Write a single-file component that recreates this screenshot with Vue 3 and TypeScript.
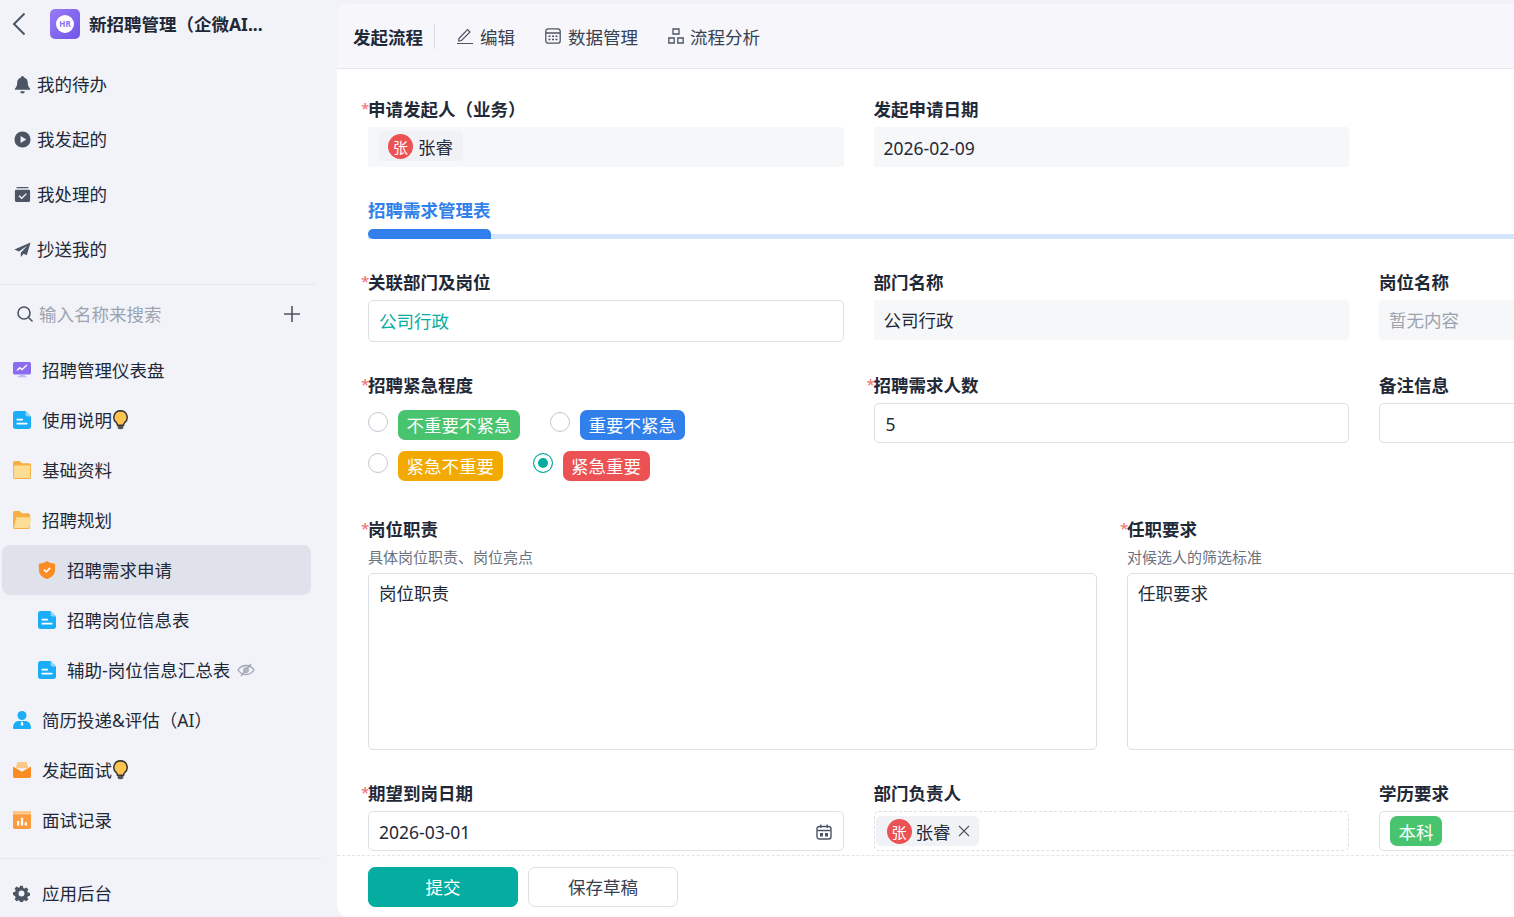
<script setup lang="ts">
interface Shape { d: string; fill: string }
interface NavItem { label: string; icon: Shape[]; sub?: boolean; active?: boolean; bulb?: boolean; hidden?: boolean }

const G = '#4b5563'
const docIcon: Shape[] = [
  { d: 'M3 0h11l6 6v11a3 3 0 0 1-3 3H3a3 3 0 0 1-3-3V3a3 3 0 0 1 3-3z', fill: '#1badf8' },
  { d: 'M14 0l6 6h-4a2 2 0 0 1-2-2z', fill: '#8fd6fc' },
  { d: 'M4 8.500h7v2H4zM4 13h12v2H4z', fill: '#fff' },
]
const topItems: { label: string; icon: Shape[] }[] = [
  { label: '我的待办', icon: [{ d: 'M10 1a1.600 1.600 0 0 1 1.600 1.600c2.600.8 4 3 4 5.600 0 3.200.8 4.600 2.400 6.200v1.100H2v-1.100c1.600-1.600 2.400-3 2.400-6.200 0-2.600 1.400-4.800 4-5.600A1.600 1.600 0 0 1 10 1zM7.600 17h4.800a2.400 2.400 0 0 1-4.800 0z', fill: G }] },
  { label: '我发起的', icon: [{ d: 'M10 1.500a8.500 8.500 0 1 1 0 17 8.500 8.500 0 0 1 0-17zM8 6.200v7.600l6-3.800z', fill: G }] },
  { label: '我处理的', icon: [{ d: 'M5 2h10a1.500 1.500 0 0 1 1.500 1.500H3.500A1.500 1.500 0 0 1 5 2zM3.500 5h13A1.500 1.500 0 0 1 18 6.500V16a2 2 0 0 1-2 2H4a2 2 0 0 1-2-2V6.500A1.500 1.500 0 0 1 3.500 5zM13.600 8.600l-4.400 4.300-2.400-2.200-1 1.100 3.400 3.100 5.400-5.300z', fill: G }] },
  { label: '抄送我的', icon: [{ d: 'M18.500 2.500L1.500 10l4.700 2.200L15 6l-6.800 7.300v4.700l3-3.400 3.300 1.400z', fill: G }] },
]
const treeItems: NavItem[] = [
  { label: '招聘管理仪表盘', icon: [
    { d: 'M2 1h16a2 2 0 0 1 2 2v10a2 2 0 0 1-2 2H2a2 2 0 0 1-2-2V3a2 2 0 0 1 2-2z', fill: '#8b6cf0' },
    { d: 'M7 15h6v2h2v1H5v-1h2z', fill: '#c3b4f7' },
    { d: 'M4 10l3.500-3.500 2.500 2L15 4l1 1-6 5.500-2.500-2L5 11z', fill: '#fff' },
  ] },
  { label: '使用说明', icon: docIcon, bulb: true },
  { label: '基础资料', icon: [
    { d: 'M2 0h5.500L10 2.500h8a2 2 0 0 1 2 2V18a2 2 0 0 1-2 2H2a2 2 0 0 1-2-2V2a2 2 0 0 1 2-2z', fill: '#f5b041' },
    { d: 'M2 5h16a1 1 0 0 1 1 1v12a1 1 0 0 1-1 1H2a1 1 0 0 1-1-1V6a1 1 0 0 1 1-1z', fill: '#fddc94' },
  ] },
  { label: '招聘规划', icon: [
    { d: 'M2 0h5.500L10 2.500h7a2 2 0 0 1 2 2V18a2 2 0 0 1-2 2H2a2 2 0 0 1-2-2V2a2 2 0 0 1 2-2z', fill: '#f5b041' },
    { d: 'M4.500 7h14.500a1 1 0 0 1 1 1.200l-1.800 9.900a1 1 0 0 1-1 .9H2a1 1 0 0 1-1-1.200L3.500 7.800a1 1 0 0 1 1-.8z', fill: '#fddc94' },
  ] },
  { label: '招聘需求申请', sub: true, active: true, icon: [
    { d: 'M10 0c2 1.600 5 2.600 8 2.800.6 0 1 .4 1 1V10c0 5-4 8.500-9 10C5 18.500 1 15 1 10V3.800c0-.6.4-1 1-1 3-.2 6-1.200 8-2.800z', fill: '#fb8c23' },
    { d: 'M6 10l1.200-1.200L9.200 10.800l3.800-3.800L14.200 8.200l-5 5z', fill: '#fff' },
  ] },
  { label: '招聘岗位信息表', sub: true, icon: docIcon },
  { label: '辅助-岗位信息汇总表', sub: true, icon: docIcon, hidden: true },
  { label: '简历投递&评估（AI）', icon: [
    { d: 'M10 0a5 5 0 1 1 0 10 5 5 0 0 1 0-10z', fill: '#1badf8' },
    { d: 'M6 11h8c3.500 0 6 3.500 6 7.500 0 .8-.5 1.500-1.500 1.500h-17C.5 20 0 19.300 0 18.500 0 14.500 2.500 11 6 11z', fill: '#1badf8' },
    { d: 'M9 12h2l.5 4H8.500z', fill: '#fff' },
  ] },
  { label: '发起面试', bulb: true, icon: [
    { d: 'M6 1h8a1.500 1.500 0 0 1 1.400 1L17 8H3l1.600-6A1.500 1.500 0 0 1 6 1z', fill: '#fdc78a' },
    { d: 'M0 6l10 6 10-6v11a2 2 0 0 1-2 2H2a2 2 0 0 1-2-2z', fill: '#fb8c23' },
  ] },
  { label: '面试记录', icon: [
    { d: 'M2 0h16a2 2 0 0 1 2 2v16a2 2 0 0 1-2 2H2a2 2 0 0 1-2-2V2a2 2 0 0 1 2-2z', fill: '#fb9a3f' },
    { d: 'M0 2a2 2 0 0 1 2-2h16a2 2 0 0 1 2 2v2H0z', fill: '#fdc78a' },
    { d: 'M4.500 11h2.500v5H4.500zM8.800 7.500h2.500V16H8.800zM13 12.500h2.500V16H13z', fill: '#fff' },
  ] },
]
const gear = 'M8.400 1h3.200l.5 2.500 1.500.7 2.200-1.300 2.300 2.300-1.300 2.200.7 1.500 2.500.5v3.200l-2.500.5-.7 1.500 1.300 2.200-2.300 2.300-2.200-1.300-1.500.7-.5 2.500H8.400l-.5-2.500-1.500-.7-2.200 1.300-2.300-2.300 1.300-2.200-.7-1.500L0 11.600V8.400l2.500-.5.7-1.500-1.300-2.200 2.300-2.300 2.200 1.300 1.500-.7zM10 6.500a3.500 3.500 0 1 0 0 7 3.500 3.500 0 0 0 0-7z'

const urgency = [
  { label: '不重要不紧急', color: '#48c46f', checked: false },
  { label: '重要不紧急', color: '#307fea', checked: false },
  { label: '紧急不重要', color: '#f2a900', checked: false },
  { label: '紧急重要', color: '#ec5153', checked: true },
]
</script>

<template>
  <div class="page">
    <aside class="side">
      <div class="brand">
        <svg class="back" width="14" height="24" viewBox="0 0 14 24"><path d="M12.500 1.500L2 12l10.500 10.500" fill="none" stroke="#4b5563" stroke-width="2"/></svg>
        <div class="logo"><span class="logo-dot">HR</span></div>
        <div class="brand-name">新招聘管理（企微AI...</div>
      </div>
      <nav class="top-nav">
        <div v-for="it in topItems" :key="it.label" class="top-item">
          <svg width="19" height="19" viewBox="0 0 20 20"><path v-for="(s, i) in it.icon" :key="i" :d="s.d" :fill="s.fill" fill-rule="evenodd"/></svg>
          <span class="nav-text">{{ it.label }}</span>
        </div>
      </nav>
      <div class="search">
        <svg width="18" height="18" viewBox="0 0 18 18"><circle cx="8" cy="8" r="6" fill="none" stroke="#4b5563" stroke-width="1.600"/><path d="M12.500 12.500L16.500 16.500" stroke="#4b5563" stroke-width="1.600"/></svg>
        <span class="search-text nav-text">输入名称来搜索</span>
        <svg class="plus" width="16" height="16" viewBox="0 0 16 16"><path d="M8 0v16M0 8h16" stroke="#4b5563" stroke-width="1.600"/></svg>
      </div>
      <nav class="tree">
        <div v-for="it in treeItems" :key="it.label" class="tree-item" :class="{ sub: it.sub, active: it.active }">
          <svg width="18" height="18" viewBox="0 0 20 20"><path v-for="(s, i) in it.icon" :key="i" :d="s.d" :fill="s.fill" fill-rule="evenodd"/></svg>
          <span class="nav-text">{{ it.label }}</span>
          <svg v-if="it.bulb" class="bulb" width="15" height="20" viewBox="1 0.300 14 19.400"><path d="M8 1a6.500 6.500 0 0 0-4 11.600c.8.700 1 1.400 1 2.400h6c0-1 .2-1.700 1-2.400A6.500 6.500 0 0 0 8 1z" fill="#fdc44f" stroke="#333" stroke-width="1.400"/><path d="M5.200 15.500h5.600v1.500a2 2 0 0 1-2 2H7.200a2 2 0 0 1-2-2z" fill="#555"/></svg>
          <svg v-if="it.hidden" class="eye" width="18" height="14" viewBox="0 0 18 14"><path d="M1 7c2-3 4.800-4.500 8-4.500S15 4 17 7c-2 3-4.800 4.500-8 4.500S3 10 1 7z" fill="none" stroke="#9ca3af" stroke-width="1.300"/><circle cx="9" cy="7" r="2.200" fill="none" stroke="#9ca3af" stroke-width="1.300"/><path d="M14 1L4 13" stroke="#9ca3af" stroke-width="1.300"/></svg>
        </div>
      </nav>
      <div class="admin">
        <svg width="17" height="17" viewBox="0 0 20 20"><path :d="gear" fill="#4b5563" fill-rule="evenodd"/></svg>
        <span class="nav-text">应用后台</span>
      </div>
    </aside>

    <main class="card">
      <header class="bar">
        <span class="bar-title">发起流程</span>
        <span class="bar-sep"></span>
        <span class="bar-link">
          <svg width="16" height="18" viewBox="0 0 16 18"><path d="M2 11.500L10.500 2.500l2.500 2.500L4.500 13.500 1.800 14zM0 16.500h16" fill="none" stroke="#4b5563" stroke-width="1.200"/></svg>
          编辑
        </span>
        <span class="bar-link">
          <svg width="16" height="16" viewBox="0 0 16 16"><rect x=".8" y=".8" width="14.400" height="14.400" rx="2.500" fill="none" stroke="#4b5563" stroke-width="1.300"/><path d="M1 5h14" stroke="#4b5563" stroke-width="1.300"/><path d="M3.500 7.500h2v1.500h-2zM7 7.500h2v1.500H7zM10.500 7.500h2v1.500h-2zM3.500 10.700h2v1.500h-2zM7 10.700h2v1.500H7zM10.500 10.700h2v1.500h-2z" fill="#4b5563"/></svg>
          数据管理
        </span>
        <span class="bar-link link-flow">
          <svg width="16" height="16" viewBox="0 0 16 16"><path d="M5 1h6v5H5zM.8 10h5.400v5H.8zM9.800 10h5.400v5H9.800z" fill="none" stroke="#4b5563" stroke-width="1.300"/></svg>
          流程分析
        </span>
      </header>

      <div class="form">
        <section class="grid3 row-a">
          <div class="field">
            <label class="req">申请发起人（业务）</label>
            <div class="ro ro-user"><span class="chip"><span class="avatar">张</span>张睿</span></div>
          </div>
          <div class="field">
            <label>发起申请日期</label>
            <div class="ro">2026-02-09</div>
          </div>
        </section>

        <div class="tabs">
          <div class="tab-name">招聘需求管理表</div>
          <div class="tab-bar"><span class="tab-on"></span></div>
        </div>

        <section class="grid3 row-b">
          <div class="field">
            <label class="req">关联部门及岗位</label>
            <div class="box tall teal">公司行政</div>
          </div>
          <div class="field">
            <label>部门名称</label>
            <div class="ro">公司行政</div>
          </div>
          <div class="field">
            <label>岗位名称</label>
            <div class="ro muted">暂无内容</div>
          </div>
        </section>

        <section class="grid3 row-c">
          <div class="field">
            <label class="req">招聘紧急程度</label>
            <div class="radios">
              <div v-for="o in urgency" :key="o.label" class="opt">
                <span class="radio" :class="{ on: o.checked }"></span>
                <span class="tag" :style="{ background: o.color }">{{ o.label }}</span>
              </div>
            </div>
          </div>
          <div class="field">
            <label class="req">招聘需求人数</label>
            <div class="box num">5</div>
          </div>
          <div class="field">
            <label>备注信息</label>
            <div class="box"></div>
          </div>
        </section>

        <section class="grid2 row-d">
          <div class="field">
            <label class="req">岗位职责</label>
            <div class="hint">具体岗位职责、岗位亮点</div>
            <div class="area">岗位职责</div>
          </div>
          <div class="field">
            <label class="req">任职要求</label>
            <div class="hint">对候选人的筛选标准</div>
            <div class="area">任职要求</div>
          </div>
        </section>

        <section class="grid3 row-e">
          <div class="field">
            <label class="req">期望到岗日期</label>
            <div class="box date">
              <span>2026-03-01</span>
              <svg width="16" height="16" viewBox="0 0 16 16"><rect x="1" y="2.500" width="14" height="12.500" rx="2.500" fill="none" stroke="#4b5563" stroke-width="1.400"/><path d="M1.500 6.500h13M4.800.5v3.500M11.200.5v3.500" stroke="#4b5563" stroke-width="1.400"/><path d="M4 9h3v3.500H4zM9 9h3v3.500H9z" fill="#4b5563"/></svg>
            </div>
          </div>
          <div class="field">
            <label>部门负责人</label>
            <div class="dash">
              <span class="chip chip-x"><span class="avatar">张</span>张睿
                <svg class="x" width="12" height="12" viewBox="0 0 12 12"><path d="M1 1l10 10M11 1L1 11" stroke="#4b5563" stroke-width="1.100"/></svg>
              </span>
            </div>
          </div>
          <div class="field">
            <label>学历要求</label>
            <div class="box edu"><span class="tag edu-tag">本科</span></div>
          </div>
        </section>
      </div>

      <footer class="foot">
        <button class="btn primary">提交</button>
        <button class="btn">保存草稿</button>
      </footer>
    </main>
  </div>
</template>

<style>
html, body { margin: 0; padding: 0; background: #f1f3f9; overflow: hidden; }
</style>

<style scoped>
.page {
  display: flex;
  width: 1514px;
  height: 917px;
  overflow: hidden;
  background: #f1f3f9;
  color: #1f2937;
  font-family: "Noto Sans", "Noto Sans CJK SC", sans-serif;
  font-size: 17.500px;
}
svg { flex: none; display: block; }

/* sidebar */
.side { width: 337px; flex: none; display: flex; flex-direction: column; }
.side > * { flex: none; }
.nav-text { padding-bottom: 2px; }
.brand { height: 50px; display: flex; align-items: center; padding: 0 0 0 12px; }
.back { margin-top: -3px; }
.logo {
  width: 30px; height: 30px; border-radius: 5px; margin: -2px 9px 0 24px;
  background: linear-gradient(135deg, #9a7cf6, #6d55e8);
  display: flex; align-items: center; justify-content: center;
}
.logo-dot {
  width: 18px; height: 18px; border-radius: 50%; background: #fff; color: #8a6cf0;
  font-size: 8px; font-weight: 700; line-height: 18px; text-align: center;
}
.brand-name { font-weight: 700; color: #1f2937; white-space: nowrap; padding-bottom: 3px; }
.top-nav { width: 316px; border-bottom: 1px solid #e5e7ee; padding: 7px 0; }
.top-item { height: 55px; display: flex; align-items: center; gap: 5px; padding-left: 13px; }
.search { height: 58px; display: flex; align-items: center; padding-left: 16px; width: 284px; }
.search-text { color: #9ca3af; margin-left: 5px; }
.plus { margin-left: auto; }
.tree { width: 322px; padding: 2px 0 13px; border-bottom: 1px solid #e5e7ee; }
.tree-item { height: 50px; display: flex; align-items: center; padding-left: 13px; }
.tree-item > svg:first-child { margin-right: 11px; }
.tree-item.sub { padding-left: 38px; width: 271px; }
.tree-item.active { background: #dfe2ea; border-radius: 8px; margin-left: 2px; padding-left: 36px; width: 273px; }
.bulb { margin-left: 1px; }
.eye { margin-left: 7px; }
.admin { height: 58px; box-sizing: border-box; padding: 10px 0 0 13px; display: flex; align-items: center; gap: 12px; }

/* main card */
.card {
  flex: none; width: 1177px; height: 913px; margin-top: 4px; background: #fff;
  border-radius: 12px 0 0 12px; overflow: hidden; display: flex; flex-direction: column;
}
.bar {
  height: 65px; flex: none; box-sizing: border-box; background: #f6f6fb; border-bottom: 1px solid #e5e7ee;
  display: flex; align-items: center; padding-left: 16px; color: #374151;
}
.bar-title { font-weight: 700; color: #1f2937; }
.bar-sep { width: 1px; height: 25px; background: #d9dce3; margin: 0 22px 0 11px; }
.bar-link { display: flex; align-items: center; gap: 7px; margin-right: 30px; }
.link-flow { gap: 6px; }

.form { flex: 1; min-height: 0; overflow: hidden; padding: 0 0 0 31px; width: 1177px; box-sizing: border-box; }
.grid3 { display: grid; grid-template-columns: repeat(3, 475.500px); column-gap: 30px; }
.grid2 { display: grid; grid-template-columns: repeat(2, 729px); column-gap: 30px; }
.field label { display: block; position: relative; font-weight: 700; line-height: 22px; margin-bottom: 7px; color: #1f2937; }
.req::before { content: "*"; position: absolute; left: -7px; top: -1px; color: #f56c6c; font-weight: 400; font-size: 15px; }
.row-a { padding-top: 29px; }
.ro {
  height: 40px; background: #f6f7f9; border-radius: 3px; box-sizing: border-box; padding: 1px 0 0 10px;
  display: flex; align-items: center; color: #1f2937;
}
.row-b .ro { padding-top: 0; padding-bottom: 1px; }
.muted { color: #9ca3af; }
.chip { display: inline-flex; align-items: center; height: 30px; padding: 0 10px; border-radius: 5px; background: #f1f2f5; gap: 5px; margin-top: -3px; }
.avatar {
  width: 25px; height: 25px; border-radius: 50%; background: #ec5153; color: #fff; font-size: 15px;
  display: inline-flex; align-items: center; justify-content: center;
}
.tabs { margin-top: 32px; }
.tab-name { width: 123px; font-weight: 700; color: #307fea; line-height: 22px; }
.tab-bar { position: relative; height: 5px; margin-top: 13px; background: #d3e4fb; }
.tab-on { position: absolute; left: 0; bottom: 0; width: 123px; height: 10px; background: #307fea; border-radius: 9px 9px 0 9px; }
.row-b { padding-top: 32px; }
.box {
  height: 40px; box-sizing: border-box; border: 1px solid #dcdfe6; border-radius: 5px; background: #fff;
  display: flex; align-items: center; padding-left: 10px;
}
.tall { height: 42px; padding-bottom: 2px; }
.teal { color: #05ada0; }
.row-c { padding-top: 32px; }
.num { padding: 2px 0 0 11px; }
.radios { display: flex; flex-wrap: wrap; row-gap: 11px; padding-top: 7px; }
.opt { display: flex; align-items: center; gap: 10px; margin-right: 30px; height: 30px; }
.radio {
  width: 20px; height: 20px; box-sizing: border-box; border-radius: 50%; border: 1px solid #c2c6d2; margin-top: -6px; background: #fff;
}
.radio.on { border-color: #05ada0; box-shadow: inset 0 0 0 4px #fff; background: #05ada0; }
.tag {
  height: 30px; box-sizing: border-box; padding: 0 8.500px 2px; border-radius: 7px; color: #fff; display: inline-flex; align-items: center;
}
.row-d { padding-top: 37px; }
.row-d label { margin-bottom: 0; }
.hint { font-size: 15px; color: #6b7280; line-height: 20px; margin: 7px 0 6px; }
.area {
  height: 177px; box-sizing: border-box; border: 1px solid #dcdfe6; border-radius: 5px; padding: 6px 10px; line-height: 26px;
}
.row-e { padding-top: 32px; }
.date { justify-content: space-between; padding: 1px 11px 0 10px; }
.dash { height: 40px; box-sizing: border-box; border: 1px dashed #dcdfe6; border-radius: 5px; display: flex; align-items: center; padding-left: 1px; }
.chip-x { margin-top: 0; padding: 0 9px 0 11px; gap: 4px; }
.x { margin-left: 3px; }
.edu { padding-left: 10px; }
.edu-tag { background: #48c46f; padding-bottom: 0; }

.foot {
  height: 62px; flex: none; box-sizing: border-box; border-top: 1px dashed #e3e5ea; background: #fff;
  display: flex; align-items: flex-start; gap: 10px; padding: 11px 0 0 31px;
}
.btn {
  width: 150px; height: 40px; border: 1px solid #dcdfe6; border-radius: 7px; background: #fff; color: #374151;
  font: inherit; padding: 0 0 2px;
}
.primary { background: #05ada0; border-color: #05ada0; color: #fff; }
</style>
